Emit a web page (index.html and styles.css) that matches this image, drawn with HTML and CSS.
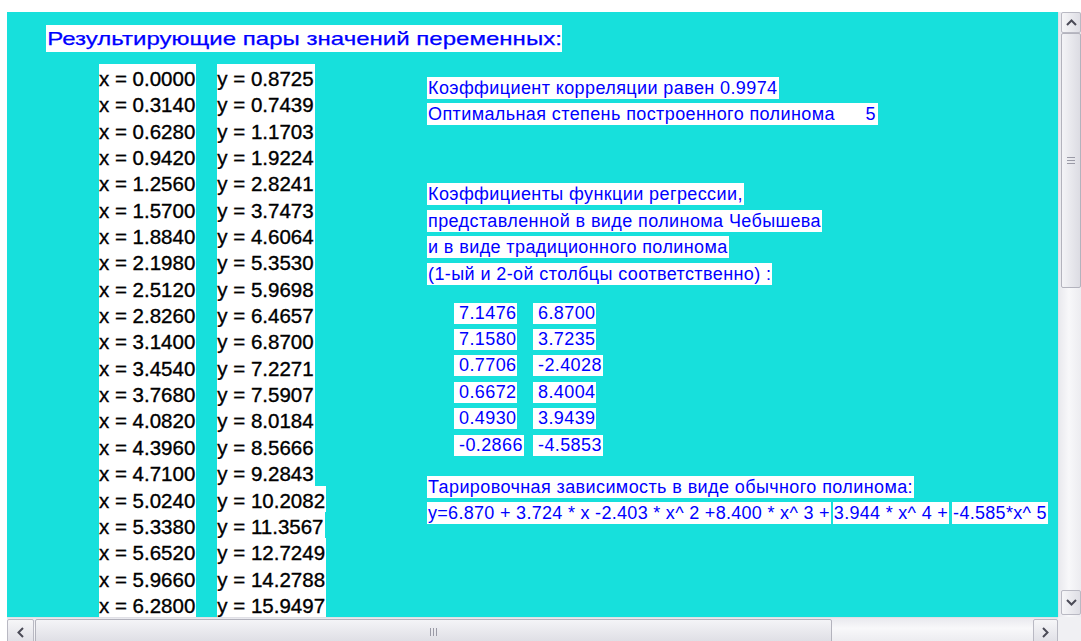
FILE: index.html
```html
<!DOCTYPE html>
<html lang="ru">
<head>
<meta charset="utf-8">
<title>Результаты аппроксимации</title>
<link rel="stylesheet" href="styles.css">
</head>
<body>
<div class="window">
  <div class="canvas">
    <div class="title"><span>Результирующие пары значений переменных:</span></div>
    <div class="main">
      <div class="pairs">
        <div class="col">
          <div class="cell">x = 0.0000</div>
          <div class="cell">x = 0.3140</div>
          <div class="cell">x = 0.6280</div>
          <div class="cell">x = 0.9420</div>
          <div class="cell">x = 1.2560</div>
          <div class="cell">x = 1.5700</div>
          <div class="cell">x = 1.8840</div>
          <div class="cell">x = 2.1980</div>
          <div class="cell">x = 2.5120</div>
          <div class="cell">x = 2.8260</div>
          <div class="cell">x = 3.1400</div>
          <div class="cell">x = 3.4540</div>
          <div class="cell">x = 3.7680</div>
          <div class="cell">x = 4.0820</div>
          <div class="cell">x = 4.3960</div>
          <div class="cell">x = 4.7100</div>
          <div class="cell">x = 5.0240</div>
          <div class="cell">x = 5.3380</div>
          <div class="cell">x = 5.6520</div>
          <div class="cell">x = 5.9660</div>
          <div class="cell">x = 6.2800</div>
        </div>
        <div class="col">
          <div class="cell">y = 0.8725</div>
          <div class="cell">y = 0.7439</div>
          <div class="cell">y = 1.1703</div>
          <div class="cell">y = 1.9224</div>
          <div class="cell">y = 2.8241</div>
          <div class="cell">y = 3.7473</div>
          <div class="cell">y = 4.6064</div>
          <div class="cell">y = 5.3530</div>
          <div class="cell">y = 5.9698</div>
          <div class="cell">y = 6.4657</div>
          <div class="cell">y = 6.8700</div>
          <div class="cell">y = 7.2271</div>
          <div class="cell">y = 7.5907</div>
          <div class="cell">y = 8.0184</div>
          <div class="cell">y = 8.5666</div>
          <div class="cell">y = 9.2843</div>
          <div class="cell">y = 10.2082</div>
          <div class="cell">y = 11.3567</div>
          <div class="cell">y = 12.7249</div>
          <div class="cell">y = 14.2788</div>
          <div class="cell">y = 15.9497</div>
        </div>
      </div>

      <div class="report">
        <div class="stack">
          <div class="line">Коэффициент корреляции равен 0.9974</div>
          <div class="line degree"><span>Оптимальная степень построенного полинома</span><span>5</span></div>
        </div>

        <div class="stack caption">
          <div class="line">Коэффициенты функции регрессии,</div>
          <div class="line">представленной в виде полинома Чебышева</div>
          <div class="line">и в виде традиционного полинома</div>
          <div class="line">(1-ый и 2-ой столбцы соответственно) :</div>
        </div>

        <div class="coefs">
          <div class="num">7.1476</div><div class="num">6.8700</div>
          <div class="num">7.1580</div><div class="num">3.7235</div>
          <div class="num">0.7706</div><div class="num">-2.4028</div>
          <div class="num">0.6672</div><div class="num">8.4004</div>
          <div class="num">0.4930</div><div class="num">3.9439</div>
          <div class="num">-0.2866</div><div class="num">-4.5853</div>
        </div>

        <div class="stack formula">
          <div class="line">Тарировочная зависимость в виде обычного полинома:</div>
          <div class="terms">
            <div class="line">y=6.870 + 3.724 * x -2.403 * x^ 2 +8.400 * x^ 3 +</div>
            <div class="line">3.944 * x^ 4 +</div>
            <div class="line">-4.585*x^ 5</div>
          </div>
        </div>
      </div>
    </div>
  </div>

  <div class="vscroll">
    <div class="btn">
      <svg width="11" height="7" viewBox="0 0 11 7"><path d="M1 6 L5.5 1.5 L10 6" fill="none" stroke="#4b4b57" stroke-width="2"/></svg>
    </div>
    <div class="thumb vthumb">
      <svg width="8" height="7" viewBox="0 0 8 7"><path d="M0 0.5H8M0 3.5H8M0 6.5H8" stroke="#9a9aa6" stroke-width="1"/></svg>
    </div>
    <div class="track"></div>
    <div class="btn down">
      <svg width="11" height="7" viewBox="0 0 11 7"><path d="M1 1 L5.5 5.5 L10 1" fill="none" stroke="#4b4b57" stroke-width="2"/></svg>
    </div>
  </div>

  <div class="hscroll">
    <div class="btn left">
      <svg width="7" height="11" viewBox="0 0 7 11"><path d="M6 1 L1.5 5.5 L6 10" fill="none" stroke="#4b4b57" stroke-width="2"/></svg>
    </div>
    <div class="thumb hthumb">
      <svg width="7" height="8" viewBox="0 0 7 8"><path d="M0.5 0V8M3.5 0V8M6.5 0V8" stroke="#9a9aa6" stroke-width="1"/></svg>
    </div>
    <div class="track"></div>
    <div class="btn right">
      <svg width="7" height="11" viewBox="0 0 7 11"><path d="M1 1 L5.5 5.5 L1 10" fill="none" stroke="#4b4b57" stroke-width="2"/></svg>
    </div>
  </div>

  <div class="corner"></div>
</div>
</body>
</html>
```

FILE: styles.css
```css
body {
  margin: 0;
  background: #ffffff;
  font-family: "Liberation Sans", Arial, sans-serif;
}

/* form frame: client area + scrollbars */
.window {
  margin: 12px 0 0 7px;
  width: 1074px;
  height: 629px;
  display: grid;
  grid-template-columns: 1051px 23px;
  grid-template-rows: 605px 24px;
  overflow: hidden;
}

.canvas {
  background: #17e0dc;
  overflow: hidden;
  padding: 13px 0 0 39px;
}

/* heading */
.title {
  width: 516px;
  height: 27px;
  background: #ffffff;
  color: #0000ff;
  font-size: 19px;
  line-height: 27px;
  white-space: nowrap;
  overflow: hidden;
}

.title span {
  display: inline-block;
  padding-left: 1px;
  transform: scaleX(1.265);
  transform-origin: 0 50%;
  -webkit-text-stroke: 0.25px #0000ff;
}

.main {
  display: grid;
  grid-template-columns: 381px auto;
  margin-top: 12px;
}

/* x / y value columns */
.pairs {
  display: flex;
  gap: 21px;
  padding-left: 53px;
  align-items: flex-start;
}

.col {
  display: flex;
  flex-direction: column;
  align-items: flex-start;
}

.cell {
  background: #ffffff;
  color: #000000;
  font-size: 20.5px;
  letter-spacing: 0;
  height: 26.35px;
  line-height: 30px;
  padding-right: 1px;
  white-space: nowrap;
  -webkit-text-stroke: 0.35px #000000;
}

/* right-hand report */
.report {
  padding-top: 13px;
  color: #0000ff;
  font-size: 18px;
  letter-spacing: 0.4px;
}

.stack {
  display: flex;
  flex-direction: column;
  align-items: flex-start;
  gap: 4.4px;
}

.line {
  background: #ffffff;
  height: 22px;
  line-height: 22px;
  padding: 0 1px;
  white-space: nowrap;
}

.degree {
  display: flex;
  justify-content: space-between;
  width: 448px;
  padding-right: 2px;
}

.caption {
  margin-top: 58px;
}

.coefs {
  margin-top: 18px;
  padding-left: 27px;
  display: grid;
  grid-template-columns: 79px auto;
  row-gap: 5.4px;
  justify-items: start;
}

.num {
  background: #ffffff;
  height: 21px;
  line-height: 21px;
  padding: 0 1px 0 5px;
}

.formula {
  margin-top: 20px;
}

.terms {
  display: flex;
  gap: 2px;
  letter-spacing: 0.3px;
}

.terms .line:last-child {
  margin-left: 1px;
}

/* scrollbars */
.vscroll {
  background: linear-gradient(90deg, #e9e9ee, #f8f8fa 45%, #ececf0);
  display: flex;
  flex-direction: column;
  padding: 0 0 2px 2px;
  border-left: 1px solid #e2e2e8;
}

.hscroll {
  background: linear-gradient(180deg, #e9e9ee, #f8f8fa 45%, #ececf0);
  display: flex;
  padding-top: 1px;
  border-top: 1px solid #e0e0e6;
}

.corner {
  background: #f0f0f3;
}

.btn {
  flex: none;
  border: 1px solid #b9b9c3;
  border-radius: 2px;
  background: linear-gradient(90deg, #f6f6f8, #dedee5);
  display: flex;
  align-items: center;
  justify-content: center;
  box-sizing: border-box;
}

.vscroll .btn {
  height: 21px;
}

.vscroll .down {
  height: 25px;
}

.hscroll .btn {
  height: 26px;
  background: linear-gradient(180deg, #f6f6f8, #dedee5);
}

.hscroll .left {
  width: 27px;
}

.hscroll .right {
  width: 25px;
}

.thumb {
  flex: none;
  border: 1px solid #b3b3bd;
  border-radius: 2px;
  display: flex;
  align-items: center;
  justify-content: center;
  box-sizing: border-box;
}

.vthumb {
  height: 255px;
  background: linear-gradient(90deg, #f4f4f7, #dcdce3);
}

.hthumb {
  width: 797px;
  margin-left: 1px;
  height: 26px;
  background: linear-gradient(180deg, #f4f4f7, #dcdce3);
}

.track {
  flex: 1;
}
```
